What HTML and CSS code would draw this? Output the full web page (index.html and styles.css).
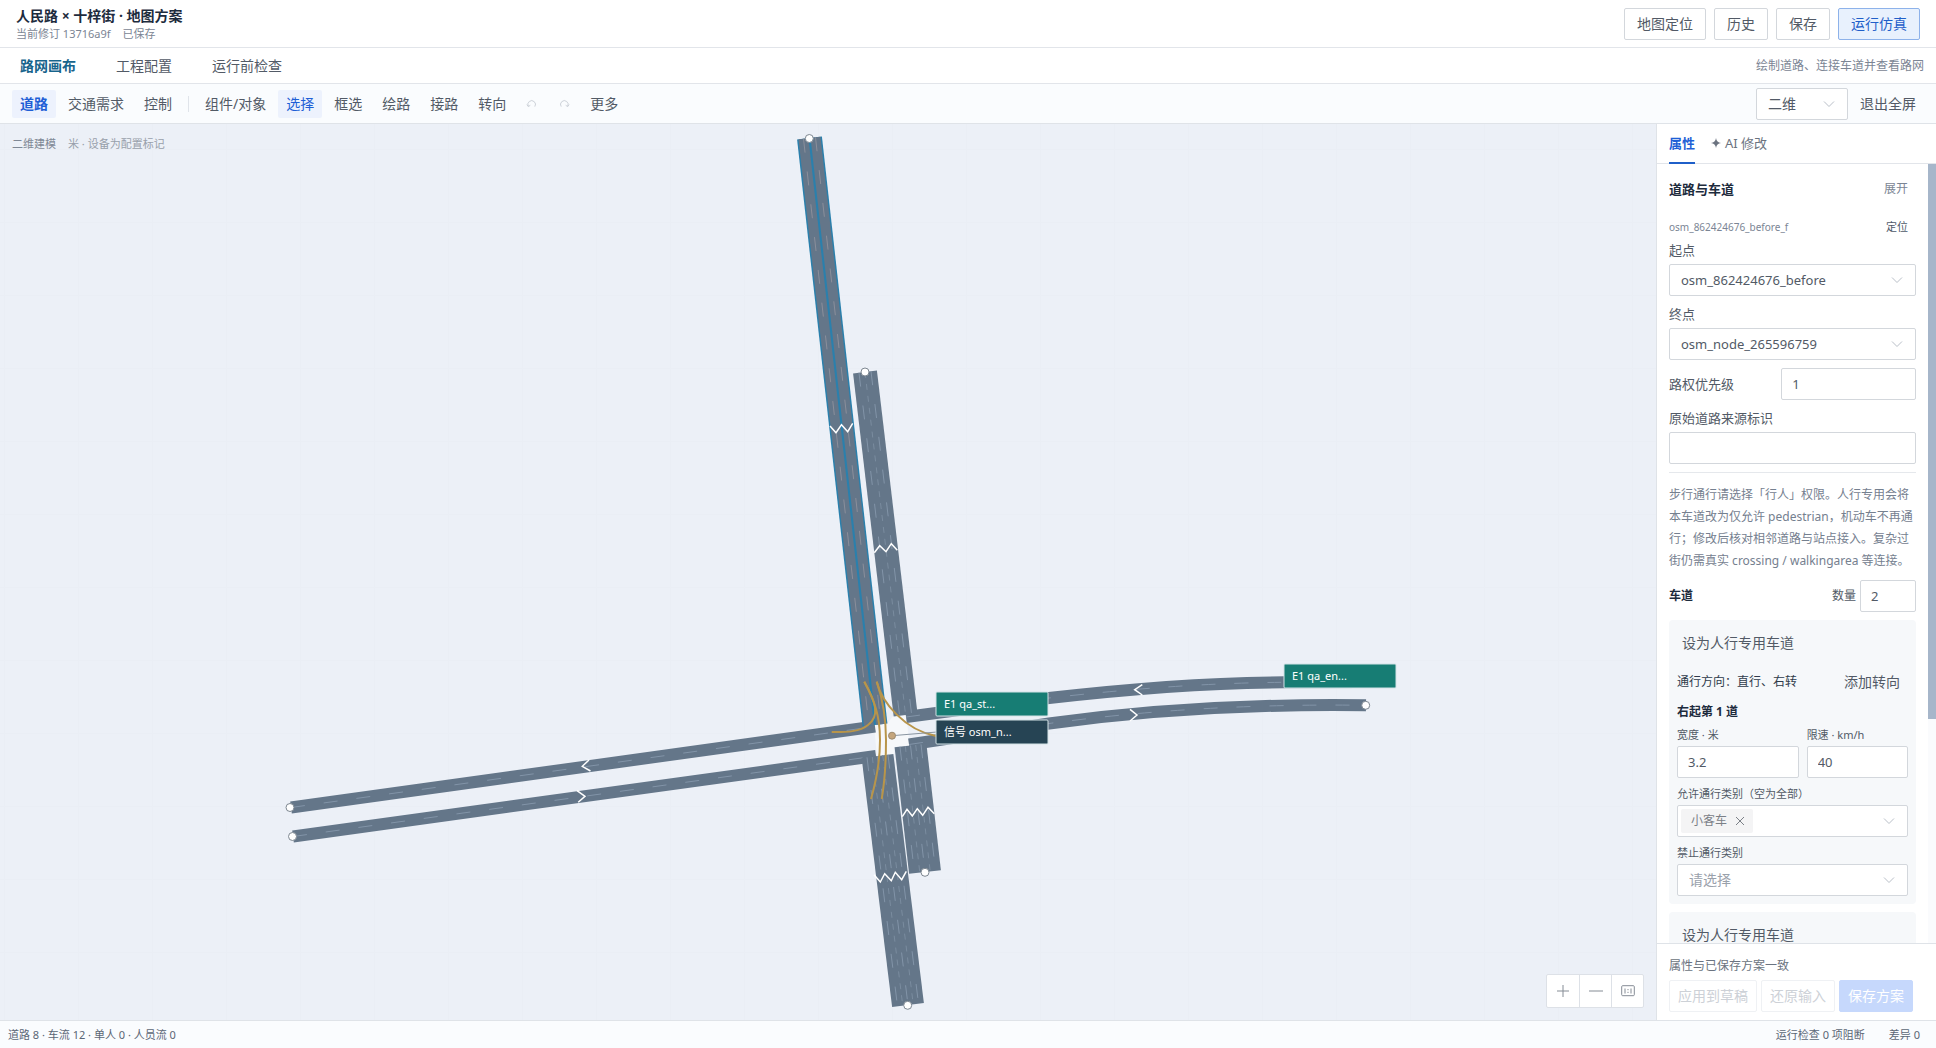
FILE: index.html
```html
<!DOCTYPE html>
<html lang="zh-CN">
<head>
<meta charset="utf-8">
<title>人民路 × 十梓街 · 地图方案</title>
<link rel="stylesheet" href="styles.css">
</head>
<body>
<div class="app">
  <header class="header">
    <div class="project">
      <h1 class="project-title">人民路 × 十梓街 · 地图方案</h1>
      <p class="project-meta"><span>当前修订 13716a9f</span><span>已保存</span></p>
    </div>
    <div class="header-actions">
      <button class="btn" type="button">地图定位</button>
      <button class="btn" type="button">历史</button>
      <button class="btn" type="button">保存</button>
      <button class="btn btn-tint" type="button">运行仿真</button>
    </div>
  </header>

  <nav class="tabs">
    <a class="tab tab-active" href="#canvas">路网画布</a>
    <a class="tab" href="#config">工程配置</a>
    <a class="tab" href="#check">运行前检查</a>
    <span class="tabs-hint">绘制道路、连接车道并查看路网</span>
  </nav>

  <div class="toolbar">
    <button class="tool tool-active tool-strong" type="button">道路</button>
    <button class="tool" type="button">交通需求</button>
    <button class="tool" type="button">控制</button>
    <span class="tool-divider"></span>
    <button class="tool" type="button">组件/对象</button>
    <button class="tool tool-active" type="button">选择</button>
    <button class="tool" type="button">框选</button>
    <button class="tool" type="button">绘路</button>
    <button class="tool" type="button">接路</button>
    <button class="tool" type="button">转向</button>
    <button class="tool tool-icon" type="button" aria-label="撤销" disabled>
      <svg width="12" height="12" viewBox="0 0 12 12"><path d="M2.4 8.4A3.8 3.8 0 1 1 8.800 8.600M.8 6.600l1.500 2 2-1.300"/></svg>
    </button>
    <button class="tool tool-icon" type="button" aria-label="重做" disabled>
      <svg width="12" height="12" viewBox="0 0 12 12"><path d="M9.600 8.400A3.800 3.800 0 1 0 3.200 8.600M11.200 6.600l-1.500 2-2-1.300"/></svg>
    </button>
    <button class="tool" type="button">更多</button>
    <div class="toolbar-end">
      <div class="select select-view">
        <select aria-label="视图"><option>二维</option></select>
        <svg class="chevron" width="12" height="12" viewBox="0 0 12 12"><path d="M1 3.500l5 5 5-5"/></svg>
      </div>
      <button class="tool" type="button">退出全屏</button>
    </div>
  </div>

  <main class="workspace">
    <section class="canvas" id="canvas">
      <svg class="map" viewBox="0 124 1656 896" preserveAspectRatio="xMidYMid slice" role="img" aria-label="路网">
        <defs>
          <pattern id="grid" x="4" y="0" width="74" height="73" patternUnits="userSpaceOnUse">
            <path class="grid-line" d="M.5 0V73M0 3.500H74"/>
          </pattern>
        </defs>
        <rect x="0" y="124" width="1656" height="896" fill="url(#grid)"/>

        <polygon class="junction" points="874,725 887,724 893,716 906,715 907,722 909,739 909,746 894,747 894,756 877,757"/>

        <!-- west -->
        <path class="road single" d="M291 807.500L875 726.500"/>
        <path class="road single" d="M293 836.500L876 756"/>
        <path class="dash" d="M291 807.500L875 726.500"/>
        <path class="dash" d="M293 836.500L876 756"/>
        <!-- east -->
        <path class="road single" d="M906 717L1049 698Q1180 683 1284 682.300L1360 682"/>
        <path class="road single" d="M909 744.500L1049 723.500Q1200 703 1366 705.300"/>
        <path class="dash" d="M906 717L1049 698Q1180 683 1284 682.300"/>
        <path class="dash" d="M909 744.500L1049 723.500Q1200 703 1366 705.300"/>
        <!-- north, outbound -->
        <path class="road double" d="M865 372L905.600 715"/>
        <path class="dash" d="M859 372.700L899.600 715.700M871 371.300L911.600 714.300"/>
        <path class="dash fine" d="M865 372L905.600 715"/>
        <!-- south -->
        <path class="road triple" d="M877.500 756L908 1005"/>
        <path class="dash" d="M867 757.300L897.500 1006.300M877.500 756L908 1005M888 754.700L918.500 1003.700"/>
        <path class="dash fine" d="M872.300 757L902.800 1006M882.700 755L913.200 1004"/>
        <path class="road triple" d="M910.500 745.500L925 872"/>
        <path class="dash" d="M900 746.700L914.500 873.200M910.500 745.500L925 872M921 744.300L935.500 870.800"/>
        <path class="dash fine" d="M905.300 746L919.800 872.500M915.700 745L930.200 871.500"/>
        <!-- north, selected -->
        <path class="road-selected" d="M809.500 138L875 725"/>
        <path class="road strip" d="M803.500 138.700L869 725.700M815.500 137.300L881 724.300"/>
        <path class="dash warm" d="M803.500 138.700L869 725.700M815.500 137.300L881 724.300"/>

        <g class="arrows">
          <path d="M830 426L836 432.700 841.500 424.700 847.700 431.700 852.700 423.300"/>
          <path d="M874.300 552.700L879.700 545.700 886 551.700 891.300 543.700 897.300 550.300"/>
          <path d="M874 874.700L880.300 882 884.700 873.700 891.300 880.700 895.300 872.300 901.700 879.700 906.300 871.300"/>
          <path d="M902.300 816.700L907 809.300 912.300 816 917.300 808.700 922.700 815.300 928 807.300 934.300 813.700"/>
          <path d="M589 760L582.300 766.300 590.500 771"/>
          <path d="M577 790.700L585 796.300 578.200 802.300"/>
          <path d="M1142.300 684.700L1134.700 689.700 1142.300 695"/>
          <path d="M1130 709.300L1137 715 1130 721"/>
        </g>

        <g class="turns">
          <path d="M864.300 681.700C876 702 880 716 868 725C860 731.700 847 732.300 831.700 732"/>
          <path d="M864.300 681.700C874 700 880 715 880 740C880 765 875 785 871 799"/>
          <path d="M876.700 681.700C883 700 886 720 886 740C886 765 885 780 881.700 799"/>
          <path d="M876.700 681.700C882 703 905 730 936 736"/>
        </g>
        <path class="leader" d="M892 735.700L937 732"/>
        <circle class="signal" cx="892" cy="735.700" r="3.500"/>

        <g class="nodes">
          <circle cx="809.300" cy="138.500" r="4"/>
          <circle cx="865" cy="372" r="4"/>
          <circle cx="290" cy="807.500" r="4"/>
          <circle cx="292.500" cy="836.500" r="4"/>
          <circle cx="925" cy="872.300" r="4"/>
          <circle cx="907.700" cy="1005.300" r="4"/>
          <circle cx="1365.700" cy="705.300" r="4"/>
        </g>

        <g class="marker">
          <rect x="936" y="692" width="112" height="24" rx="1"/>
          <text x="944" y="708">E1 qa_st...</text>
        </g>
        <g class="marker marker-signal">
          <rect x="936" y="720" width="112" height="24" rx="1"/>
          <text x="944" y="736">信号 osm_n...</text>
        </g>
        <g class="marker">
          <rect x="1284" y="664" width="112" height="24" rx="1"/>
          <text x="1292" y="680">E1 qa_en...</text>
        </g>
      </svg>

      <p class="canvas-note"><span>二维建模</span><span class="muted">米 · 设备为配置标记</span></p>
      <div class="zoom">
        <button type="button" aria-label="放大"><svg width="14" height="14" viewBox="0 0 14 14"><path d="M7 1v12M1 7h12"/></svg></button>
        <button type="button" aria-label="缩小"><svg width="14" height="14" viewBox="0 0 14 14"><path d="M0 7h14"/></svg></button>
        <button type="button" aria-label="适应画布"><svg width="14" height="14" viewBox="0 0 14 14"><rect x=".7" y="1.700" width="12.600" height="10" rx="1"/><path d="M4 4.500v5M10 4.500v5M7 5v1.200M7 7.800V9"/></svg></button>
      </div>
    </section>

    <aside class="panel">
      <div class="panel-tabs">
        <a class="panel-tab panel-tab-active" href="#props">属性</a>
        <a class="panel-tab" href="#ai"><svg width="10" height="10" viewBox="0 0 10 10"><path d="M5 0Q5.600 4.400 10 5Q5.600 5.600 5 10Q4.400 5.600 0 5Q4.400 4.400 5 0Z"/></svg>AI 修改</a>
      </div>

      <div class="panel-body" id="props">
        <form class="props">
          <div class="section-head">
            <h2>道路与车道</h2>
            <button class="link link-muted" type="button">展开</button>
          </div>

          <div class="field-group">
            <div class="road-id"><span class="road-name">osm_862424676_before_f</span><button class="link" type="button">定位</button></div>
            <div class="field">
              <label for="from">起点</label>
              <div class="select">
                <select id="from"><option>osm_862424676_before</option></select>
                <svg class="chevron" width="12" height="12" viewBox="0 0 12 12"><path d="M1 3.500l5 5 5-5"/></svg>
              </div>
            </div>
          </div>
          <div class="field">
            <label for="to">终点</label>
            <div class="select">
              <select id="to"><option>osm_node_265596759</option></select>
              <svg class="chevron" width="12" height="12" viewBox="0 0 12 12"><path d="M1 3.500l5 5 5-5"/></svg>
            </div>
          </div>
          <div class="field-row">
            <label for="priority">路权优先级</label>
            <input class="input" id="priority" type="text" value="1">
          </div>
          <div class="field">
            <label for="source">原始道路来源标识</label>
            <input class="input" id="source" type="text">
          </div>

          <hr class="rule">
          <p class="help">步行通行请选择「行人」权限。人行专用会将本车道改为仅允许 pedestrian，机动车不再通行；修改后核对相邻道路与站点接入。复杂过街仍需真实 crossing / walkingarea 等连接。</p>

          <div class="lanes-head">
            <h3>车道</h3>
            <label for="count">数量</label>
            <input class="input input-count" id="count" type="text" value="2">
          </div>

          <section class="lane">
            <button class="text-btn" type="button">设为人行专用车道</button>
            <div class="lane-turns"><span>通行方向：直行、右转</span><button class="text-btn" type="button">添加转向</button></div>
            <h4>右起第 1 道</h4>
            <div class="lane-grid">
              <div class="lane-field">
                <label for="width">宽度 · 米</label>
                <input class="input" id="width" type="text" value="3.2">
              </div>
              <div class="lane-field">
                <label for="speed">限速 · km/h</label>
                <input class="input" id="speed" type="text" value="40">
              </div>
            </div>
            <div class="lane-field">
              <label for="allow">允许通行类别（空为全部）</label>
              <div class="select select-tags">
                <span class="tag">小客车<button type="button" aria-label="移除小客车"><svg width="10" height="10" viewBox="0 0 10 10"><path d="M1 1l8 8M9 1l-8 8"/></svg></button></span>
                <select id="allow"><option></option></select>
                <svg class="chevron" width="12" height="12" viewBox="0 0 12 12"><path d="M1 3.500l5 5 5-5"/></svg>
              </div>
            </div>
            <div class="lane-field">
              <label for="deny">禁止通行类别</label>
              <div class="select select-empty">
                <select id="deny"><option>请选择</option></select>
                <svg class="chevron" width="12" height="12" viewBox="0 0 12 12"><path d="M1 3.500l5 5 5-5"/></svg>
              </div>
            </div>
          </section>

          <section class="lane">
            <button class="text-btn" type="button">设为人行专用车道</button>
          </section>
        </form>
        <div class="scrollbar"><div class="scrollbar-thumb"></div></div>
      </div>

      <footer class="panel-foot">
        <p>属性与已保存方案一致</p>
        <div class="panel-actions">
          <button class="btn btn-small" type="button" disabled>应用到草稿</button>
          <button class="btn btn-small" type="button" disabled>还原输入</button>
          <button class="btn btn-small btn-primary" type="button" disabled>保存方案</button>
        </div>
      </footer>
    </aside>
  </main>

  <footer class="status">
    <span>道路 8 · 车流 12 · 单人 0 · 人员流 0</span>
    <span class="status-end"><span>运行检查 0 项阻断</span><span>差异 0</span></span>
  </footer>
</div>
</body>
</html>
```

FILE: styles.css
```css
* {
  box-sizing: border-box;
}

body,
h1,
h2,
h3,
h4,
p {
  margin: 0;
}

body {
  background: #fff;
  color: #525a66;
  font: 14px/20px "Noto Sans", "Noto Sans CJK SC", sans-serif;
}

button,
input,
select {
  margin: 0;
  color: inherit;
  font: inherit;
}

button {
  padding: 0;
  border: 0;
  background: none;
  white-space: nowrap;
}

a {
  color: inherit;
  text-decoration: none;
}

svg {
  display: block;
  flex: none;
  fill: none;
  stroke: currentColor;
}

.app {
  display: flex;
  flex-direction: column;
  height: 100vh;
}

/* Header */
.header {
  display: flex;
  align-items: center;
  justify-content: space-between;
  height: 48px;
  padding: 0 16px;
  border-bottom: 1px solid #e2e5ea;
}

.project-title {
  color: #1d2b3d;
  font-size: 14px;
  font-weight: 700;
  line-height: 20px;
}

.project-meta {
  display: flex;
  gap: 12px;
  color: #7b8594;
  font-size: 11px;
  line-height: 16px;
}

.header-actions {
  display: flex;
  gap: 8px;
}

.btn {
  height: 32px;
  padding: 0 12px;
  border: 1px solid #d3d7dc;
  border-radius: 2px;
  background: #fff;
}

.btn-tint {
  border-color: #8db2ea;
  background: #e8f1fd;
  color: #1f5fc9;
}

/* Page tabs */
.tabs {
  display: flex;
  align-items: center;
  gap: 40px;
  height: 36px;
  padding: 0 12px 0 20px;
  border-bottom: 1px solid #e2e5ea;
}

.tab-active {
  color: #17648c;
  font-weight: 700;
}

.tabs-hint {
  margin-left: auto;
  color: #7b8594;
  font-size: 12px;
}

/* Toolbar */
.toolbar {
  display: flex;
  align-items: center;
  gap: 4px;
  height: 40px;
  padding: 0 12px;
  border-bottom: 1px solid #dfe3e8;
  background: #fafcfe;
}

.tool {
  height: 28px;
  padding: 0 8px;
  border-radius: 2px;
}

.tool-active {
  background: #edf2fd;
  color: #1f5fd6;
}

.tool-strong {
  font-weight: 700;
}

.tool-icon {
  color: #cdd2d9;
}

.tool-divider {
  width: 1px;
  height: 16px;
  margin: 0 4px;
  background: #e0e4ea;
}

.toolbar-end {
  display: flex;
  align-items: center;
  gap: 4px;
  margin-left: auto;
}

/* Form controls */
.select {
  display: flex;
  position: relative;
  height: 32px;
  border: 1px solid #d3d7dc;
  border-radius: 2px;
  background: #fff;
}

.select select {
  flex: 1;
  min-width: 0;
  padding: 0 32px 0 11px;
  border: 0;
  background: none;
  appearance: none;
}

.chevron {
  position: absolute;
  top: 9px;
  right: 12px;
  color: #b9bfc8;
  pointer-events: none;
}

.select-view {
  width: 92px;
}

.select-empty {
  color: #9aa1ab;
}

.select-tags {
  align-items: center;
  padding-left: 3px;
}

.tag {
  display: flex;
  align-items: center;
  gap: 8px;
  height: 24px;
  padding: 0 8px 0 10px;
  border-radius: 2px;
  background: #f4f4f5;
  color: #7b8087;
  font-size: 12px;
}

.input {
  width: 100%;
  height: 32px;
  padding: 0 10px;
  border: 1px solid #d3d7dc;
  border-radius: 2px;
  background: #fff;
}

/* Canvas */
.workspace {
  display: flex;
  flex: 1;
  min-height: 0;
}

.canvas {
  position: relative;
  flex: 1;
  min-width: 0;
  background: #ecf0f7;
}

.map {
  position: absolute;
  inset: 0;
  width: 100%;
  height: 100%;
  stroke: none;
}

.grid-line {
  stroke: #eaeef5;
}

.junction {
  fill: #f6f8fa;
}

.road {
  stroke: #647689;
}

.single {
  stroke-width: 12;
}

.double {
  stroke-width: 24;
}

.triple {
  stroke-width: 32;
}

.strip {
  stroke-width: 10;
}

.road-selected {
  stroke: #2a80ad;
  stroke-width: 25;
}

.dash {
  stroke: #8294a8;
  stroke-width: 1;
  stroke-dasharray: 14 19;
}

.fine {
  stroke: #7a8c9f;
  stroke-dasharray: 6 6;
}

.warm {
  stroke: #8b8f9b;
}

.arrows {
  stroke: #fff;
  stroke-width: 1.5;
}

.turns {
  stroke: #b8954a;
  stroke-width: 2;
}

.leader {
  stroke: #8995a1;
  stroke-width: 1;
}

.signal {
  fill: #c4a57c;
  stroke: #9c8a6e;
}

.nodes {
  fill: #fff;
  stroke: #7d8791;
  stroke-width: 1;
}

.marker rect {
  fill: #177d74;
  stroke: #d3e3e6;
}

.marker-signal rect {
  fill: #264454;
}

.marker text {
  fill: #fff;
  font-size: 11px;
}

.canvas-note {
  display: flex;
  position: absolute;
  top: 12px;
  left: 12px;
  gap: 12px;
  color: #7f8895;
  font-size: 11px;
  line-height: 16px;
}

.muted {
  color: #98a0ab;
}

.zoom {
  display: flex;
  position: absolute;
  right: 12px;
  bottom: 12px;
  border: 1px solid #dde1e7;
  border-radius: 2px;
  background: #fff;
  color: #858c95;
}

.zoom button {
  display: grid;
  place-items: center;
  width: 32px;
  height: 32px;
}

.zoom button + button {
  border-left: 1px solid #dde1e7;
}

/* Properties panel */
.panel {
  display: flex;
  flex: none;
  flex-direction: column;
  width: 280px;
  border-left: 1px solid #dfe3e8;
  background: #fff;
}

.panel-tabs {
  display: flex;
  flex: none;
  gap: 16px;
  height: 40px;
  padding: 0 12px;
  border-bottom: 1px solid #e2e5ea;
  color: #6b7380;
  font-size: 13px;
}

.panel-tab {
  display: flex;
  align-items: center;
  gap: 4px;
  height: 40px;
  border-bottom: 2px solid transparent;
}

.panel-tab svg {
  fill: currentColor;
  stroke: none;
}

.panel-tab-active {
  border-color: #1f5fc9;
  color: #1f5fd6;
  font-weight: 700;
}

.panel-body {
  display: flex;
  flex: 1;
  min-height: 0;
}

.props {
  display: flex;
  flex: 1;
  flex-direction: column;
  gap: 8px;
  min-width: 0;
  padding: 8px 12px;
  overflow: hidden;
  font-size: 13px;
}

.props > * {
  flex: none;
}

.props .select,
.props .input {
  font-size: 13px;
}

.text-btn,
.props .select-empty {
  font-size: 14px;
}

.scrollbar {
  width: 8px;
  background: #fafbfd;
}

.scrollbar-thumb {
  height: 71.2%;
  background: #a6b6ca;
}

.section-head,
.road-id,
.lane-turns {
  display: flex;
  align-items: center;
  justify-content: space-between;
}

.section-head,
.road-id {
  padding-right: 8px;
}

.section-head {
  height: 34px;
}

.section-head h2 {
  color: #1d2b3d;
  font-size: 13px;
}

.road-id {
  height: 26px;
  color: #7b8594;
  font-size: 11px;
}

.road-name {
  font-size: 10px;
}

.link {
  color: #4e5969;
}

.link-muted {
  color: #7b8594;
  font-size: 12px;
}

.field {
  display: flex;
  flex-direction: column;
  gap: 4px;
}

.field-row {
  display: grid;
  grid-template-columns: 5fr 6fr;
  align-items: center;
}

.rule {
  width: 100%;
  height: 1px;
  margin: 0;
  border: 0;
  background: #e5e8ec;
}

.help {
  padding-top: 3px;
  color: #75808f;
  font-size: 12px;
  line-height: 22px;
}

.lanes-head {
  display: flex;
  align-items: center;
  gap: 4px;
  font-size: 12px;
}

.lanes-head h3 {
  flex: 1;
  color: #1d2b3d;
  font-size: 12px;
}

.props .input-count {
  width: 56px;
}

.lane {
  display: flex;
  flex-direction: column;
  gap: 7px;
  padding: 7px 8px 8px;
  border-radius: 4px;
  background: #f6f8fa;
}

.text-btn {
  align-self: flex-start;
  height: 32px;
  padding: 0 8px 0 5px;
}

.lane-turns {
  color: #2f3b4b;
  font-size: 12px;
}

.lane-turns .text-btn {
  color: #525a66;
}

.lane h4 {
  color: #1d2b3d;
  font-size: 12px;
  line-height: 14px;
}

.lane-grid {
  display: grid;
  grid-template-columns: 6fr 5fr;
  gap: 8px;
}

.lane-field {
  display: flex;
  flex-direction: column;
  gap: 2px;
  font-size: 11px;
  line-height: 18px;
}

.lane-field .tag {
  font-size: 12px;
}

.panel-foot {
  flex: none;
  padding: 12px 12px 8px;
  border-top: 1px solid #dfe3e8;
  color: #6b7380;
  font-size: 12px;
}

.panel-actions {
  display: flex;
  gap: 4px;
  padding-top: 4px;
}

.btn-small {
  padding: 0 8px;
  border-color: #eff1f4;
  color: #cdd1d7;
  font-size: 14px;
}

.btn-primary {
  border-color: #c6d8fc;
  background: #c6d8fc;
  color: #fff;
}

/* Status bar */
.status {
  display: flex;
  flex: none;
  align-items: center;
  justify-content: space-between;
  height: 28px;
  padding: 0 16px 0 8px;
  border-top: 1px solid #dfe3e8;
  background: #fafcfe;
  color: #5b6675;
  font-size: 11px;
}

.status-end {
  display: flex;
  gap: 24px;
}
```
